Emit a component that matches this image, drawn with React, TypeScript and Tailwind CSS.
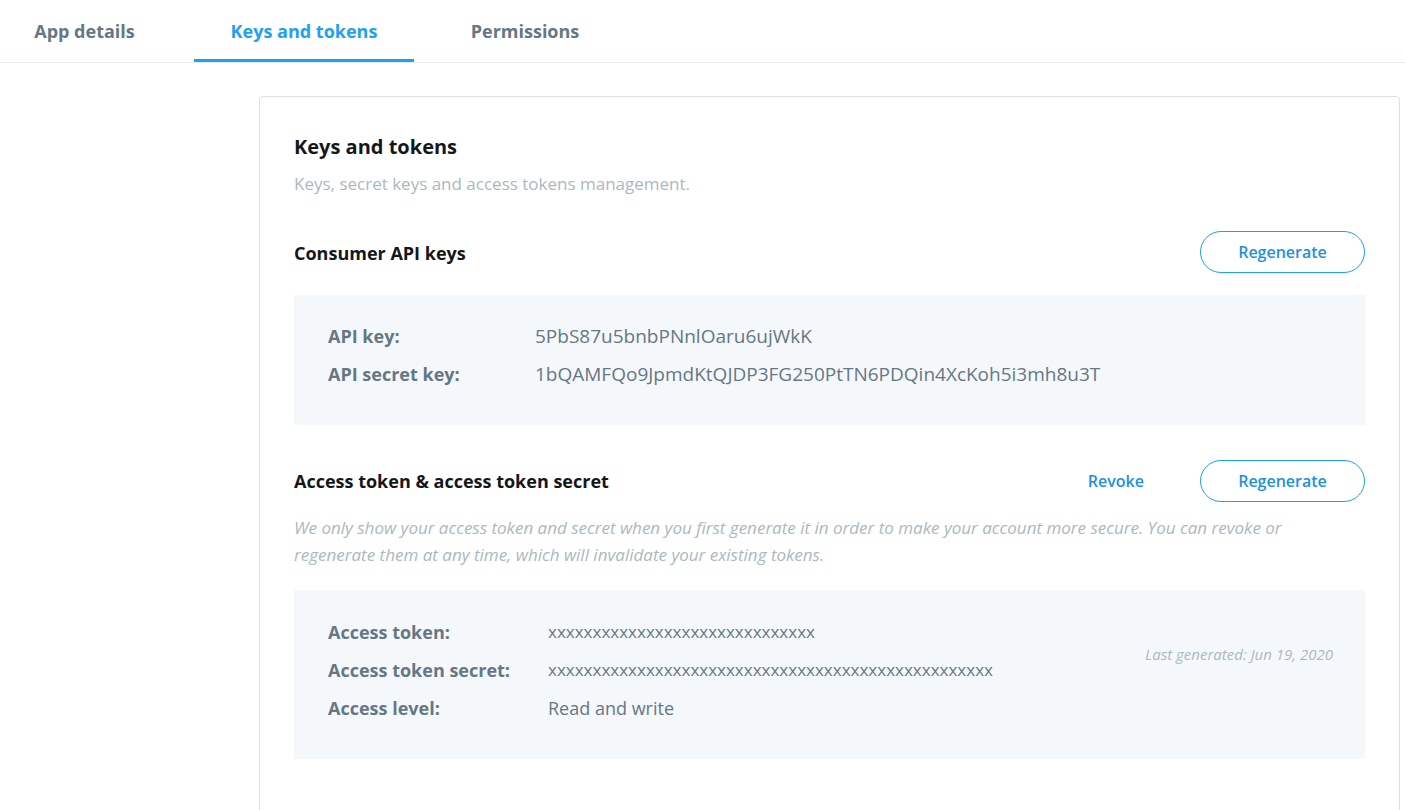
const font = { fontFamily: '"Open Sans", "Noto Sans", Arial, sans-serif' };

const tabs = [
  { label: "App details", width: "w-[169px]", active: false },
  { label: "Keys and tokens", width: "w-[220px]", active: true },
  { label: "Permissions", width: "w-[182px]", active: false },
];

function KeyRows({
  rows,
  labelWidth,
}: {
  rows: { label: string; value: string; size: string }[];
  labelWidth: string;
}) {
  return (
    <div className="flex flex-col">
      {rows.map((row) => (
        <div key={row.label} className="flex h-[38px] items-center">
          <span className={`${labelWidth} shrink-0 text-[18px] font-bold leading-[24px] text-[#657786]`}>
            {row.label}
          </span>
          <span className={`${row.size} leading-[24px] text-[#657786]`}>{row.value}</span>
        </div>
      ))}
    </div>
  );
}

function RegenerateButton() {
  return (
    <button
      type="button"
      className="h-[42px] w-[165px] rounded-full border border-[#1da1f2] text-[16px] font-semibold text-[#1d91e0]"
    >
      Regenerate
    </button>
  );
}

export default function App() {
  return (
    <div className="min-h-[810px] bg-white" style={font}>
      <nav className="flex h-[63px] border-b border-[#e6ecf0]">
        {tabs.map((tab, i) => (
          <div
            key={tab.label}
            className={`${tab.width} ${i === 1 ? "ml-[25px]" : ""} ${i === 2 ? "ml-[20px]" : ""} flex items-center justify-center border-b-[3px] pt-[3px] text-[18px] font-bold ${
              tab.active
                ? "border-[#1da1f2] text-[#1da1f2]"
                : "border-transparent text-[#657786]"
            }`}
          >
            {tab.label}
          </div>
        ))}
      </nav>

      <section className="ml-[259px] mr-[5px] mt-[33px] min-h-[760px] rounded-[4px] border border-[#d8e0e6] px-[34px] pt-[36px]">
        <h2 className="text-[20px] font-bold leading-[28px] text-[#14171a]">
          Keys and tokens
        </h2>
        <p className="mt-[11px] text-[17px] leading-[24px] text-[#aab8c2]">
          Keys, secret keys and access tokens management.
        </p>

        <div className="mt-[35px] flex h-[42px] items-center justify-between">
          <h3 className="pt-[2px] text-[18px] font-bold text-[#14171a]">Consumer API keys</h3>
          <RegenerateButton />
        </div>

        <div className="mt-[22px] bg-[#f5f8fa] pb-[32px] pl-[34px] pt-[22px]">
          <KeyRows
            labelWidth="w-[207px]"
            rows={[
              { label: "API key:", value: "5PbS87u5bnbPNnlOaru6ujWkK", size: "text-[19px]" },
              {
                label: "API secret key:",
                value: "1bQAMFQo9JpmdKtQJDP3FG250PtTN6PDQin4XcKoh5i3mh8u3T",
                size: "text-[19px]",
              },
            ]}
          />
        </div>

        <div className="mt-[35px] flex h-[42px] items-center justify-between">
          <h3 className="text-[18px] font-bold text-[#14171a]">
            Access token &amp; access token secret
          </h3>
          <div className="flex items-center gap-[56px]">
            <button type="button" className="text-[16px] font-semibold text-[#1d91e0]">
              Revoke
            </button>
            <RegenerateButton />
          </div>
        </div>
        <p className="mt-[12px] text-[17px] italic leading-[27px] text-[#aab8c2]">
          We only show your access token and secret when you first generate it in order to make
          your account more secure. You can revoke or regenerate them at any time, which will
          invalidate your existing tokens.
        </p>

        <div className="mt-[22px] flex justify-between bg-[#f5f8fa] pb-[32px] pl-[34px] pr-[32px] pt-[23px]">
          <KeyRows
            labelWidth="w-[220px]"
            rows={[
              {
                label: "Access token:",
                value: "xxxxxxxxxxxxxxxxxxxxxxxxxxxxxx",
                size: "text-[17px]",
              },
              {
                label: "Access token secret:",
                value: "xxxxxxxxxxxxxxxxxxxxxxxxxxxxxxxxxxxxxxxxxxxxxxxxxx",
                size: "text-[17px]",
              },
              { label: "Access level:", value: "Read and write", size: "text-[18px]" },
            ]}
          />
          <span className="mt-[30px] self-start text-[15px] italic text-[#aab8c2]">
            Last generated: Jun 19, 2020
          </span>
        </div>
      </section>
    </div>
  );
}
